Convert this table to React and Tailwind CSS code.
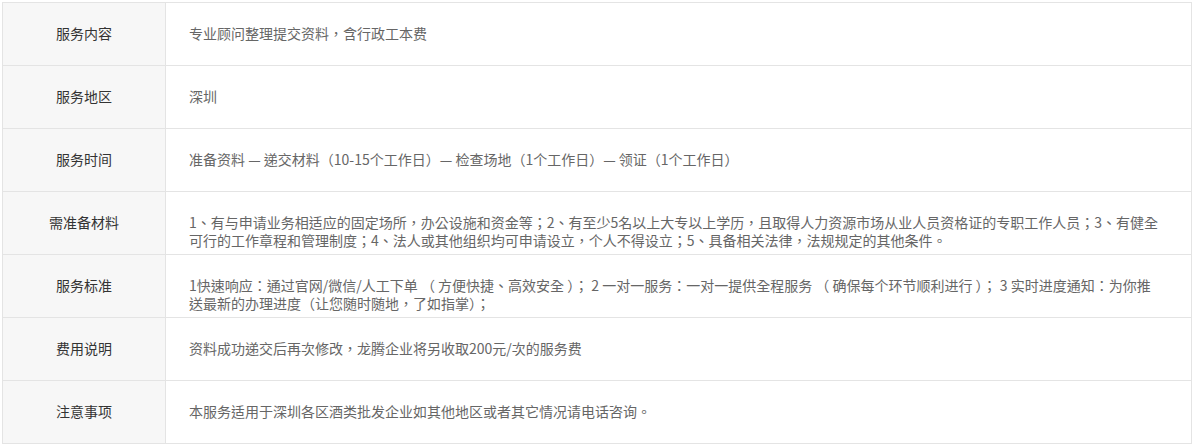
import React from "react";

const rows = [
  { label: "服务内容", text: "专业顾问整理提交资料，含行政工本费" },
  { label: "服务地区", text: "深圳" },
  {
    label: "服务时间",
    text: "准备资料 — 递交材料（10-15个工作日）— 检查场地（1个工作日）— 领证（1个工作日）",
  },
  {
    label: "需准备材料",
    text: "1、有与申请业务相适应的固定场所，办公设施和资金等；2、有至少5名以上大专以上学历，且取得人力资源市场从业人员资格证的专职工作人员；3、有健全可行的工作章程和管理制度；4、法人或其他组织均可申请设立，个人不得设立；5、具备相关法律，法规规定的其他条件。",
  },
  {
    label: "服务标准",
    text: "1快速响应：通过官网/微信/人工下单 （ 方便快捷、高效安全 ）； 2 一对一服务：一对一提供全程服务 （ 确保每个环节顺利进行 ）； 3 实时进度通知：为你推送最新的办理进度（让您随时随地，了如指掌）；",
  },
  { label: "费用说明", text: "资料成功递交后再次修改，龙腾企业将另收取200元/次的服务费" },
  { label: "注意事项", text: "本服务适用于深圳各区酒类批发企业如其他地区或者其它情况请电话咨询。" },
];

const App = () => {
  return (
    <div className="bg-white w-[1192px] h-[445px] pt-[2px] pl-[2px] font-['Noto_Sans_CJK_TC','Noto_Sans_CJK_SC',sans-serif] text-[14px]">
      <div className="w-[1190px] grid grid-cols-[163px_1fr] border-t border-l border-[#e4e4e4]">
        {rows.map((row) => (
          <React.Fragment key={row.label}>
            <div className="h-[63px] bg-[#f7f7f7] border-r border-b border-[#e4e4e4] pt-[21px] text-center leading-[18px] text-[#333]">
              {row.label}
            </div>
            <div className="h-[63px] border-r border-b border-[#e4e4e4] pt-[21px] pl-[23px] pr-[29px] leading-[18px] text-[#666]">
              {row.text}
            </div>
          </React.Fragment>
        ))}
      </div>
    </div>
  );
};

export default App;
